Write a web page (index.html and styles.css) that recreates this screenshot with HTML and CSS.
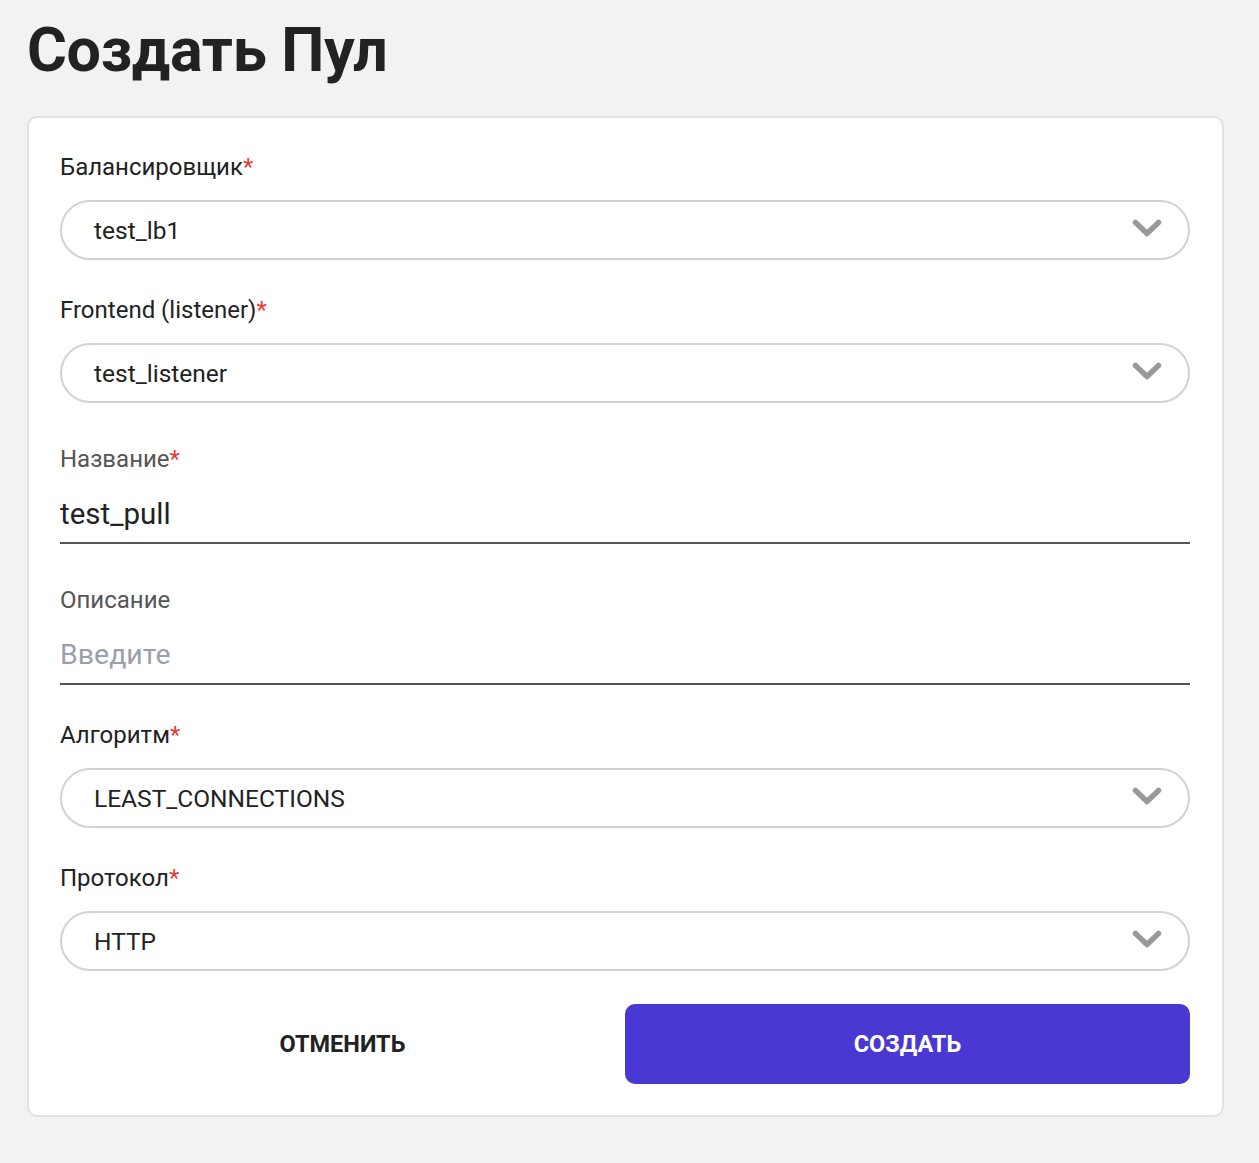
FILE: index.html
```html
<!DOCTYPE html>
<html lang="ru">
<head>
<meta charset="utf-8">
<title>Создать Пул</title>
<link rel="stylesheet" href="styles.css">
</head>
<body>
<div class="page">
  <h1 class="title">Создать Пул</h1>
  <div class="card">
    <div class="field">
      <div class="label dark">Балансировщик<span class="req">*</span></div>
      <div class="select"><span>test_lb1</span>
        <svg class="chev" width="30" height="20" viewBox="0 0 30 20"><path d="M3.5 3.5 L15 14.5 L26.5 3.5" fill="none" stroke="#999" stroke-width="5.5" stroke-linecap="round" stroke-linejoin="round"/></svg>
      </div>
    </div>
    <div class="field">
      <div class="label dark">Frontend (listener)<span class="req">*</span></div>
      <div class="select"><span>test_listener</span>
        <svg class="chev" width="30" height="20" viewBox="0 0 30 20"><path d="M3.5 3.5 L15 14.5 L26.5 3.5" fill="none" stroke="#999" stroke-width="5.5" stroke-linecap="round" stroke-linejoin="round"/></svg>
      </div>
    </div>
    <div class="field text-field">
      <div class="label">Название<span class="req">*</span></div>
      <div class="input">test_pull</div>
    </div>
    <div class="field text-field">
      <div class="label">Описание</div>
      <div class="input placeholder">Введите</div>
    </div>
    <div class="field">
      <div class="label dark">Алгоритм<span class="req">*</span></div>
      <div class="select"><span>LEAST_CONNECTIONS</span>
        <svg class="chev" width="30" height="20" viewBox="0 0 30 20"><path d="M3.5 3.5 L15 14.5 L26.5 3.5" fill="none" stroke="#999" stroke-width="5.5" stroke-linecap="round" stroke-linejoin="round"/></svg>
      </div>
    </div>
    <div class="field">
      <div class="label dark">Протокол<span class="req">*</span></div>
      <div class="select"><span>HTTP</span>
        <svg class="chev" width="30" height="20" viewBox="0 0 30 20"><path d="M3.5 3.5 L15 14.5 L26.5 3.5" fill="none" stroke="#999" stroke-width="5.5" stroke-linecap="round" stroke-linejoin="round"/></svg>
      </div>
    </div>
    <div class="actions">
      <button class="btn cancel">ОТМЕНИТЬ</button>
      <button class="btn primary">СОЗДАТЬ</button>
    </div>
  </div>
</div>
</body>
</html>
```

FILE: styles.css
```css
html, body {
  margin: 0;
  padding: 0;
  background: #f2f2f2;
}
body {
  font-family: "Roboto", "Liberation Sans", sans-serif;
  color: #222;
}
.page {
  padding: 14px 35px 45px 27px;
}
.title {
  margin: 0 0 30px 0;
  font-family: "Roboto", "Liberation Sans", sans-serif;
  font-weight: 700;
  font-size: 61px;
  line-height: 72px;
  color: #222;
  letter-spacing: -0.3px;
}
.card {
  background: #fff;
  border: 2px solid #e2e2e2;
  border-radius: 10px;
  padding: 34px 32px 31px 31px;
}
.field {
  margin-bottom: 35px;
}
.label {
  font-size: 24px;
  line-height: 30px;
  color: #555;
  margin-bottom: 18px;
}
.label.dark {
  color: #222;
}
.req {
  color: #e53935;
}
.select {
  height: 56px;
  border: 2px solid #d2d2d2;
  border-radius: 30px;
  display: flex;
  align-items: center;
  justify-content: space-between;
  padding: 0 26px 0 32px;
  font-size: 24.5px;
  color: #222;
}
.chev {
  display: block;
  margin-top: -2px;
}
.text-field {
  margin-top: 41px;
  margin-bottom: 35px;
}
.text-field .label {
  margin-bottom: 22px;
}
.input {
  font-size: 29.5px;
  line-height: 36px;
  color: #222;
  padding-bottom: 10px;
  border-bottom: 2px solid #555;
}
.input.placeholder {
  color: #9aa0aa;
  font-size: 28.5px;
}
.actions {
  display: grid;
  grid-template-columns: 1fr 1fr;
  margin-top: -2px;
}
.btn {
  height: 80px;
  border: none;
  border-radius: 10px;
  font-family: "Roboto", "Liberation Sans", sans-serif;
  font-weight: 700;
  font-size: 23.5px;
  letter-spacing: 0;
  cursor: pointer;
}
.cancel {
  background: transparent;
  color: #222;
}
.primary {
  background: #4a38d2;
  color: #fff;
}
```
